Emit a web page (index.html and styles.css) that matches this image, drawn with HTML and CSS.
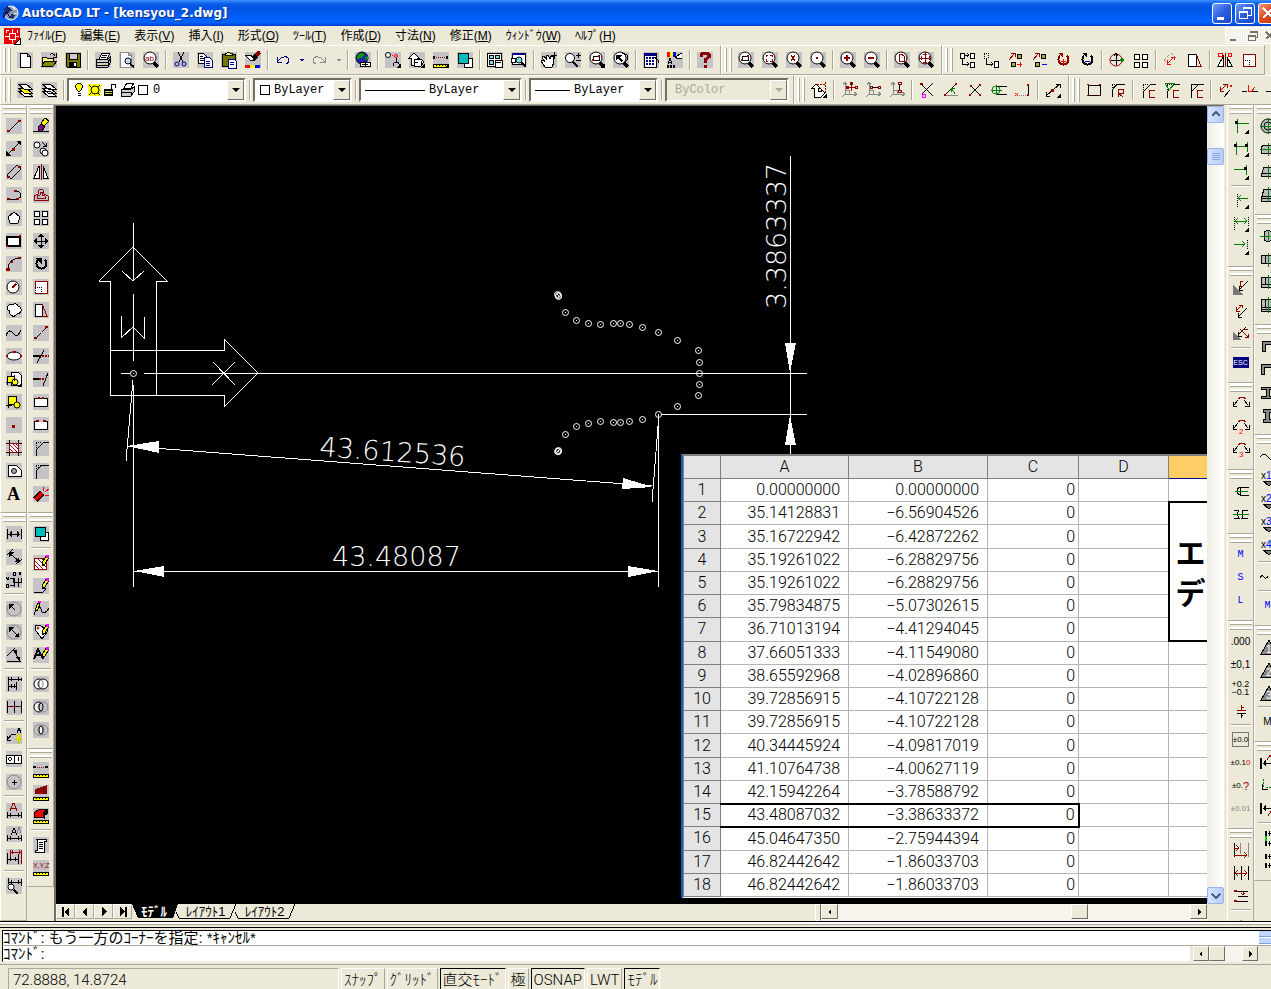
FILE: index.html
```html
<!DOCTYPE html>
<html lang="ja">
<head>
<meta charset="utf-8">
<title>AutoCAD LT - [kensyou_2.dwg]</title>
<link rel="stylesheet" href="styles.css">
</head>
<body>
<svg class="defs" aria-hidden="true">
  <defs>
    <g id="mag"><circle cx="7" cy="6" r="6" class="w"/><path d="M11 11l4 4" stroke-width="3"/></g>
    <g id="tri"><path d="M16 11v5h-5z" class="k"/></g>
    <g id="pencil"><path d="M9 8l4-7 3 1-4 7-3 2z" class="y"/><path d="M13 0h3v3h-3z" fill="#f0f" stroke="none"/></g>
    <g id="ruler"><rect x="0" y="12" width="15" height="3" class="y"/><path d="M3 14v-1M6 14v-1M9 14v-1M12 14v-1"/></g>
    <g id="hdim"><path d="M1 3v10M15 3v10M2 8h12M5 5v6M4 6v4M11 5v6M12 6v4"/></g>
    <g id="ucs"><path class="a" d="M4 0v12h12M2 3l2-3 2 3M13 10l3 2-3 2M4 8h4v4M1 15l3-3"/></g>
    <g id="weld"><path d="M5 4L1 9M0 6v4h4M11 4l4 5M16 6v4h-4"/><path class="r" d="M5 3V2h1V1h5v1h1v1"/></g>
    <g id="cham"><path d="M3 16V10L11 2H16"/><path d="M3 8V2H9" stroke-dasharray="1 1"/></g>
    <g id="dtri"><path d="M3 10h11l-5 5z" fill="#777"/></g>
    <g id="base"><path d="M1 15L9 1l8 14z" fill="#888"/></g>
    <g id="nodes"><path d="M2 8L7 2M4 1h4v4" class="r"/><rect x="10" y="2" width="4" height="4" fill="#aa3"/><rect x="4" y="10" width="4" height="4" fill="#aa3"/></g>
    <g id="pt"><circle cx=".5" cy=".5" r="3"/><path d="M0 0h1" /></g>
  </defs>
</svg>

<header class="title">
  <svg class="ic" aria-hidden="true"><circle cx="9" cy="8" r="7" fill="#89a" stroke="#fff"/><path d="M2 4l4-3 3 4-4 4-4 2zM9 9l4 1-2 4-3-1z" fill="#137" stroke="none"/><path d="M1 13l4-6 3 6M5 2l5 4" stroke="#206"/><path d="M10 2l4 3M12 8l3 1" stroke="#eee"/></svg>
  <h1>AutoCAD LT - [kensyou_2.dwg]</h1>
  <div class="winbtns">
    <button aria-label="最小化"><svg><path d="M4 14h7" stroke-width="3"/></svg></button>
    <button aria-label="元に戻す"><svg><path d="M7 6V3h8v8h-3M7 4h8M3 7h8v7H3zM3 8h8"/></svg></button>
    <button class="close" aria-label="閉じる"><svg><path d="M4 4l10 10M14 4L4 14" stroke-width="2"/></svg></button>
  </div>
</header>

<nav class="menu">
  <svg class="ic" aria-hidden="true"><rect width="16" height="16" fill="#e00" stroke="none"/><path d="M8 1v4M8 11v4M1 8h4M11 8h4M5 5h6v6H5zM2 2v3M2 2h3M13 2v3" stroke="#fff"/><path d="M11 16l5-5v5z" fill="#fff"/></svg>
  <button>ﾌｧｲﾙ(<u>F</u>)</button><button>編集(<u>E</u>)</button><button>表示(<u>V</u>)</button><button>挿入(<u>I</u>)</button><button>形式(<u>O</u>)</button><button>ﾂｰﾙ(<u>T</u>)</button><button>作成(<u>D</u>)</button><button>寸法(<u>N</u>)</button><button>修正(<u>M</u>)</button><button>ｳｨﾝﾄﾞｳ(<u>W</u>)</button><button>ﾍﾙﾌﾟ(<u>H</u>)</button>
  <div class="mdi">
    <button aria-label="図面を最小化"><svg><path d="M4 12h6" stroke-width="2"/></svg></button>
    <button aria-label="図面を元に戻す"><svg><path d="M6 5V3h7v6h-2M6 4h7M4 7h7v5H4zM4 8h7"/></svg></button>
    <button aria-label="図面を閉じる"><svg><path d="M4 4l7 7M11 4l-7 7" stroke-width="2"/></svg></button>
  </div>
</nav>

<div class="row">
  <div class="hbar grey">
    <span class="grip"></span>
    <button aria-label="新規"><svg><path class="w" d="M3 1h7l3 3v11H3zM10 1v3h3"/></svg></button>
    <button aria-label="開く"><svg><path d="M1 14V5h4l1 1h6v3" fill="#ff8"/><path d="M1 14l3-5h12l-4 5z" fill="#880"/><path d="M9 3q3-3 5 1M15 1v4h-3"/></svg></button>
    <button aria-label="上書き保存"><svg><path d="M1 1h14v14H2l-1-1z" fill="#770"/><rect x="4" y="1" width="8" height="6" fill="#ccc"/><rect x="4" y="10" width="8" height="5" class="k"/><path d="M10 11v3" stroke="#fff" stroke-width="2"/></svg></button>
    <span class="sep"></span>
    <button aria-label="印刷"><svg><path class="w" d="M4 7l3-6h8l-3 6z"/><path d="M7 3h5M6 5h5"/><path d="M1 7h12l2-2v6l-2 4H1z" fill="#ccc"/><path d="M1 10h12v5M1 13h12M13 10l2-3"/><path d="M9 12h2" stroke="#cc0"/></svg></button>
    <button aria-label="印刷プレビュー"><svg><path class="w" stroke="#888" d="M1 0h8l3 3v12H1zM9 0v3h3"/><circle cx="9" cy="9" r="3" fill="#bdf"/><path d="M11 12l4 3" stroke-width="2"/></svg></button>
    <button aria-label="検索"><svg><use href="#mag"/><text x="2" y="9" class="x8 tr">ab</text></svg></button>
    <span class="sep"></span>
    <button aria-label="切り取り"><svg><path d="M5 0l5 10M11 0L6 10"/><circle class="n" cx="4" cy="12" r="2"/><circle class="n" cx="11" cy="12" r="2"/></svg></button>
    <button aria-label="コピー"><svg><path class="w" d="M1 1h5l3 3v7H1z"/><path d="M3 4h3M3 6h4M3 8h4"/><path class="w n" d="M7 5h5l3 3v7H7z"/><path class="n" d="M9 9h4M9 11h4M9 13h4"/></svg></button>
    <button aria-label="貼り付け"><svg><path d="M1 2h13v12H1z" fill="#770"/><path d="M4 3h7V1H9L8 0 6 1H4z" fill="#ff6"/><path class="w n" d="M7 7h6l2 2v7H7z"/><path class="n" d="M9 10h4M9 12h4"/></svg></button>
    <button aria-label="プロパティコピー"><svg><path d="M15 0l-6 5" stroke="#800" stroke-width="4"/><path class="k" d="M9 2l4 4-4 3-3-3z"/><path class="w" d="M0 3h6l3 5H5z"/><path d="M0 14h5" stroke="red" stroke-width="3"/><path d="M5 14h5" stroke="#ff0" stroke-width="3"/><path d="M10 14h5" stroke="#00f" stroke-width="3"/></svg></button>
    <span class="sep"></span>
    <button class="p" aria-label="元に戻す"><svg><path class="n" d="M2 5v5h5M2 10l4-4q7-3 8 2 0 3-3 4"/></svg></button>
    <button class="p dd" aria-label="元に戻す履歴"><svg><path d="M0 7h5l-2 3z" fill="#008" stroke="none"/></svg></button>
    <button class="p" aria-label="やり直し"><svg><path class="a" d="M13 5v5H8M13 10L9 6Q2 3 1 8q0 3 3 4"/></svg></button>
    <button class="p dd" aria-label="やり直し履歴"><svg><path d="M0 7h5l-2 3z" fill="#888" stroke="none"/></svg></button>
    <span class="sep"></span>
    <button aria-label="ハイパーリンク"><svg><circle cx="7" cy="6" r="6" fill="#22a"/><path d="M3 2l4-1 3 2-4 3-4 1zM9 6l4-2v4z" fill="#090" stroke="none"/><rect x="5" y="10" width="5" height="4" class="w"/><rect x="10" y="10" width="5" height="4" class="w"/><path d="M7 12h6"/></svg></button>
    <span class="sep"></span>
    <button aria-label="オブジェクトスナップ"><svg><circle class="w" cx="3" cy="3" r="2.5"/><circle cx="11" cy="4" r="1.5" class="e"/><path d="M5 3h4" class="e" stroke-dasharray="1 1"/><path d="M11 6v5M8 14q0-4 3-4t4 4"/><use href="#tri"/></svg></button>
    <button aria-label="UCS"><svg><path class="w" d="M0 6l5-5 5 5H8v7H2V6z"/><path class="w" d="M5 7h7l3 3-3 4H5z"/><path d="M6 10h3M12 9v3"/><use href="#tri"/></svg></button>
    <button aria-label="距離"><svg><path d="M1 5h14" class="r" stroke-dasharray="1 1"/><path d="M0 5h2M13 5h2" stroke-width="3"/><use href="#ruler"/><use href="#tri"/></svg></button>
    <button aria-label="表示順序"><svg><path class="w" d="M7 6h8v9H7z"/><path d="M1 1h10v10H1z" fill="#0bb"/></svg></button>
    <span class="sep"></span>
    <button aria-label="名前の付いたビュー"><svg><path class="w" d="M0 1h14v13H0z"/><path d="M2 3h4v3H2zM8 3h4v3H8zM2 8h4v4H2z" fill="#8dd"/><path class="w" d="M8 8h7v7H8z"/><path d="M9 10h5"/></svg></button>
    <button aria-label="空中ビュー"><svg><path class="w" d="M1 1h13v11H1z"/><path d="M1 2h13" class="n" stroke-width="2"/><circle cx="8" cy="8" r="3" fill="#7dd"/><path d="M10 10l5 5" stroke-width="2"/><path class="w" d="M0 6h4v4H0z"/></svg></button>
    <span class="sep"></span>
    <button aria-label="リアルタイム画面移動"><svg><path class="w" d="M4 15L0 9l2-1 2 2L1 5l2-1 3 4-1-5 2 0 2 4 1-3h2l1 6-2 5z"/><path d="M13 0v7M10 3h6"/></svg></button>
    <button aria-label="リアルタイムズーム"><svg><circle class="w" cx="5" cy="6" r="4.5"/><path d="M8 10l5 5" stroke-width="2"/><path d="M13 1v5M11 3h5M11 8h5"/></svg></button>
    <button aria-label="窓ズーム"><svg><use href="#mag"/><rect x="4" y="4" width="6" height="4"/><path class="r" d="M3 8h2M9 4h2" stroke-width="2"/><use href="#tri"/></svg></button>
    <button aria-label="前画面ズーム"><svg><use href="#mag"/><path class="k" d="M3 3h6L7 5l3 4-2 1-3-4-2 2z"/><path d="M9 1l5 2v5l-4 5"/></svg></button>
    <span class="sep"></span>
    <button aria-label="プロパティ"><svg><path class="w" d="M1 1h12v14H1z"/><path d="M1 2h12" class="n" stroke-width="3"/><path class="n" d="M3 6h2M6 6h2M9 6h2M3 9h2M6 9h2M9 9h2M3 12h2M6 12h2M9 12h2" stroke-width="2"/><path d="M11 5l4 3v3"/></svg></button>
    <button aria-label="DesignCenter"><svg><path d="M1 0v5" stroke="red" stroke-width="3"/><path d="M4 0v5" stroke="#ff0" stroke-width="3"/><path d="M7 0v5" stroke="#00f" stroke-width="3"/><path class="w" d="M15 1l-7 4 3 2 4-1"/><path d="M1 12l2-6 2 6M2 10h2"/><path d="M0 14h8" stroke-width="3" stroke-dasharray="2 1"/></svg></button>
    <span class="sep"></span>
    <button aria-label="ヘルプ"><svg><path d="M4 5V3l2-2h4l2 2v2L8 8v3M8 13v3" stroke="#800" stroke-width="3"/></svg></button>
  </div>
  <div class="hbar grey">
    <span class="grip"></span>
    <button aria-label="窓"><svg><use href="#mag"/><rect x="4" y="4" width="6" height="4"/><path class="r" d="M3 8h2M9 4h2" stroke-width="2"/></svg></button>
    <button aria-label="ダイナミック"><svg><use href="#mag"/><path class="r" d="M4 5V3h2M8 3h2v2M10 7v2H8M6 9H4V7"/></svg></button>
    <button aria-label="倍率"><svg><use href="#mag"/><path class="r" d="M5 3l4 6M9 3L5 9"/></svg></button>
    <button aria-label="中心"><svg><use href="#mag"/><path class="r" d="M6 6h2" stroke-width="2"/></svg></button>
    <span class="sep"></span>
    <button aria-label="拡大"><svg><use href="#mag"/><path class="r" d="M4 6h6M7 3v6" stroke-width="2"/></svg></button>
    <button aria-label="縮小"><svg><use href="#mag"/><path class="r" d="M4 6h6" stroke-width="2"/></svg></button>
    <span class="sep"></span>
    <button aria-label="図面全体"><svg><use href="#mag"/><path class="r" d="M5 2h3l2 2v5H5zM8 2v2"/></svg></button>
    <button aria-label="オブジェクト範囲"><svg><use href="#mag"/><path class="r" d="M1 6h12M7 0v12M3 4v4M11 4v4M5 2h4M5 10h4"/></svg></button>
  </div>
  <div class="hbar">
    <span class="grip"></span>
    <button aria-label="部品1"><svg><path class="w" d="M1 1h4v5H1zM11 1h4v5h-4zM11 10h4v5h-4z"/><path d="M5 3h5M8 1l2 2-2 2M3 7v5h7M8 10l2 2-2 2"/></svg></button>
    <button aria-label="部品2"><svg><path d="M1 1h4v5H1z" stroke-dasharray="1 1"/><path class="w" d="M11 9h4v6h-4z"/><path d="M3 7v5h7M8 10l2 2-2 2"/></svg></button>
    <button aria-label="頂点追加"><svg><use href="#nodes"/><path class="e" d="M10 12h5M13 10v5"/></svg></button>
    <button aria-label="頂点削除"><svg><use href="#nodes"/><path class="b" d="M11 12h5"/></svg></button>
    <button aria-label="回転追加"><svg><path d="M5 4a5 5 0 1 0 7 0" stroke="#800" stroke-width="2"/><path d="M3 1h5v5z" fill="#800" stroke="none"/><path class="e" d="M6 9h5M8 7v5"/></svg></button>
    <button aria-label="回転削除"><svg><path d="M5 4a5 5 0 1 0 7 0" stroke-width="2"/><path class="k" d="M3 1h5v5z"/><path class="b" d="M6 9h5"/></svg></button>
    <span class="sep"></span>
    <button aria-label="円移動"><svg><circle class="r" cx="7" cy="8" r="6"/><path d="M2 8h13M7 3v10M5 4l2-3 2 3"/><path class="g" d="M11 8h4M13 6v4" stroke-width="2"/></svg></button>
    <button aria-label="配列"><svg><path class="w" d="M1 2h5v5H1zM9 2h5v5H9zM1 10h5v5H1zM9 10h5v5H9z"/></svg></button>
    <span class="sep"></span>
    <button aria-label="平行移動"><svg><path class="a" d="M1 8l7-7 7 7M1 8l4 4" stroke-dasharray="1 1"/><path class="e" d="M4 12l7-7M4 8v4h4M8 5h3v3"/></svg></button>
    <button aria-label="ストレッチ"><svg><path class="w" d="M1 2h8v12H1z"/><path class="r" d="M9 2l5 12H9"/></svg></button>
    <span class="sep"></span>
    <button aria-label="鏡像"><svg><path class="r" d="M8 1v14"/><path class="w" d="M1 14l5-9v9zM15 14l-5-9v9z"/><path class="e" d="M1 5V1h4v3H1M11 5V1h3v3h-3"/></svg></button>
    <button aria-label="尺度"><svg><path class="w r" d="M2 2h12v12H2z"/><path d="M2 8h6v6" stroke-dasharray="1 1"/></svg></button>
  </div>
</div>

<div class="row">
  <div class="hbar grey">
    <span class="grip"></span>
    <button aria-label="画層を現在に"><svg><path class="w" d="M1 9l6 5h8l-6-5z"/><path class="y" d="M1 6l6 5h8l-6-5z"/><path class="w" d="M1 2l6 5h8L9 2z"/></svg></button>
    <button aria-label="画層"><svg><path class="w" d="M1 9l6 5h8l-6-5zM1 6l6 5h8l-6-5zM1 2l6 5h8L9 2z"/></svg></button>
    <span class="sep"></span>
    <div class="combo layer">
      <svg class="state" aria-hidden="true"><path class="y" d="M5 9Q2 6 3 3q3-3 6 0 1 3-2 6z"/><path d="M5 11h3M5 13h3"/><path d="M15 2h13v12H15z" fill="#ff0" stroke="none"/><circle cx="22" cy="8" r="4" class="y"/><path d="M16 3l2 2M27 3l-2 2M16 13l2-2M27 13l-2-2"/><path class="k" d="M31 7h9v7h-9z"/><path d="M32 9h7M32 11h7" stroke="#cc6"/><path d="M38 7V2h4v4"/><path class="w" d="M51 6l3-5h7l-3 5z"/><path d="M48 7h10l3-2v5l-3 4H48z" fill="#ccc"/><path d="M48 10h10v4"/><rect x="65" y="3" width="9" height="9" class="w"/></svg>
      <select aria-label="画層"><option>0</option></select><i></i>
    </div>
    <span class="sep"></span>
    <div class="combo color">
      <svg class="swatch" aria-hidden="true"><rect x="1" y="3" width="9" height="9" class="w"/></svg>
      <select aria-label="色"><option>ByLayer</option></select><i></i>
    </div>
    <span class="sep"></span>
    <div class="combo ltype">
      <span class="line"></span>
      <select aria-label="線種"><option>ByLayer</option></select><i></i>
    </div>
    <span class="sep"></span>
    <div class="combo lweight">
      <span class="line"></span>
      <select aria-label="線の太さ"><option>ByLayer</option></select><i></i>
    </div>
    <span class="sep"></span>
    <div class="combo pstyle off">
      <select aria-label="印刷スタイル" disabled><option>ByColor</option></select><i></i>
    </div>
  </div>
  <div class="hbar">
    <span class="grip"></span>
    <button aria-label="原点"><svg><path class="w" d="M1 6l4-4 4 4H7v3h3V7l4 4-4 4H3V6z"/><path class="r" d="M6 2h9M14 0v11" stroke-dasharray="2 1"/><use href="#tri"/></svg></button>
    <span class="sep"></span>
    <button aria-label="UCS原点"><svg><use href="#ucs"/><path class="r" d="M6 5h9M10 1v8M5 4h2v2H5zM14 4h2v2h-2zM9 0h2v2H9z"/></svg></button>
    <button aria-label="UCS X"><svg><use href="#ucs"/><path class="r" d="M5 4h2v2H5zM13 4h2v2h-2z"/><path d="M7 5h6"/></svg></button>
    <button aria-label="UCS Y"><svg><use href="#ucs"/><path class="r" d="M9 0h3v2H9zM9 8h3v2H9z"/><path d="M10 2v6"/></svg></button>
    <span class="sep"></span>
    <button aria-label="交点"><svg><path d="M2 2l12 12M14 1L3 12"/><path class="r" d="M1 2h3M1 1h3"/><path d="M3 12h3v3H3z" stroke="#f0f"/></svg></button>
    <button aria-label="角度"><svg><path d="M2 13L13 2"/><path class="a" d="M2 13h13"/><path class="r" d="M1 13h2M12 2h2" stroke-width="2"/><path class="g" d="M12 12L9 7M8 10V6h4"/></svg></button>
    <button aria-label="中間点"><svg><path d="M3 13L13 3M4 4l9 9"/><path class="r" d="M2 13h2M12 3h2M3 4h2M12 13h2" stroke-width="2"/></svg></button>
    <button aria-label="接線"><svg><circle class="g" cx="5" cy="8" r="4"/><path d="M6 4h10M6 12h10"/><path class="g" d="M0 8h11M5 3v10"/></svg></button>
    <button aria-label="垂線"><svg><path class="e" d="M0 11l3 3M3 11l-3 3"/><path class="a" d="M4 13h8" stroke-dasharray="1 1"/><path d="M13 2v12"/><path class="r" d="M12 3h2M12 13h2" stroke-width="2"/></svg></button>
    <span class="sep"></span>
    <button aria-label="構築線"><svg><path d="M1 14L15 2M1 10v4h4M11 2h4v4" /><path class="r" d="M6 8h3" stroke-width="3"/><use href="#tri"/></svg></button>
  </div>
  <div class="hbar">
    <span class="grip"></span>
    <button aria-label="長方形"><svg><path d="M2 3h12v10H2z"/><path class="r" d="M1 2h2M13 2h2M1 13h2M13 13h2"/></svg></button>
    <button aria-label="フィレット R"><svg><path d="M2 15V10Q3 3 11 2h4"/><path d="M2 8V2h6" stroke-dasharray="1 1"/><path class="r" d="M8 15V7h5v4H8l5 4"/></svg></button>
    <span class="sep"></span>
    <button aria-label="面取り 1"><svg><use href="#cham"/><path class="r" d="M15 8H9v7h6"/></svg></button>
    <button aria-label="面取り 2"><svg><use href="#cham"/><path class="g" d="M1 1h10L5 8z"/><path class="r" d="M15 8H9v7h6"/></svg></button>
    <button aria-label="面取り 3"><svg><path d="M3 16V2H16M3 10l8-8"/><path class="r" d="M15 8H9v7h6"/></svg></button>
    <span class="sep"></span>
    <button aria-label="線分延長"><svg><path d="M6 15L12 8"/><path class="r" d="M2 9l7-7M2 5v4h4M5 2h4v4"/><path class="e" d="M12 4h2" stroke-width="2"/></svg></button>
    <button aria-label="切断"><svg><path d="M0 9h5M10 9h6"/><path class="e" d="M6 3v6h4l3-4"/></svg></button>
    <button aria-label="結合"><svg><path d="M0 9h16"/></svg></button>
  </div>
</div>

<main>
  <div class="vcol grey">
    <div class="vbar">
      <span class="grip"></span>
      <button aria-label="線分"><svg><path d="M3 13L13 3"/><path class="r" d="M1 13h3M12 3h3" stroke-width="2"/></svg></button>
      <button aria-label="構築線"><svg><path d="M1 14L14 1"/><path class="k" d="M0 10v5h5zM15 5V0h-5z"/><path class="r" d="M6 8h3" stroke-width="3"/></svg></button>
      <button aria-label="二重線"><svg><path d="M1 11L11 1M5 15L15 5M1 11l4 4M11 1l4 4"/><path class="r" d="M1 13h3M12 3h3" stroke-width="2"/></svg></button>
      <button aria-label="ポリライン"><svg><path d="M2 12h9q4-1 4-4t-5-4"/><path class="r" d="M1 12h3M10 12h3M8 4h3" stroke-width="2"/></svg></button>
      <button aria-label="ポリゴン"><svg><path class="w" d="M8 2l6 5-2 6H4L2 7z"/></svg></button>
      <button aria-label="長方形"><svg><path class="w" d="M1 4h13v9H1z" stroke-width="2"/><path class="r" d="M0 13h2M13 3h2" stroke-width="2"/></svg></button>
      <button aria-label="円弧"><svg><path d="M2 12Q3 3 14 2"/><path class="r" d="M0 13h4" stroke-width="3"/><path class="r" d="M4 6h3M12 2h3" stroke-width="2"/></svg></button>
      <button aria-label="円"><svg><circle class="w" cx="7" cy="8" r="6"/><path class="r" d="M7 8l3-3M6 8h2" stroke-width="2"/></svg></button>
      <button aria-label="雲マーク"><svg><path class="w" d="M4 9Q0 8 2 4q2-3 4-1 4-3 6 1 4 1 3 5-1 3-4 3-3 4-6 1-2-1-1-4z"/></svg></button>
      <button aria-label="スプライン"><svg><path d="M0 11Q3 2 8 9q4 4 7-4"/></svg></button>
      <button aria-label="楕円"><svg><ellipse class="w" cx="8" cy="8" rx="7" ry="4"/><path class="r" d="M0 8h2M7 4h3M14 8h2" stroke-width="2"/></svg></button>
      <button aria-label="ブロック挿入"><svg><path class="w" d="M5 1h7l3 3v10H5z"/><rect x="1" y="5" width="7" height="6" class="y"/><circle cx="9" cy="11" r="3" class="y"/><path d="M0 11h5M1 9v5M8 4v6"/><use href="#tri"/></svg></button>
      <button aria-label="ブロック作成"><svg><rect x="2" y="2" width="8" height="8" class="y"/><circle cx="11" cy="11" r="3" class="y"/><path d="M0 11h6M2 9v5"/></svg></button>
      <button aria-label="点"><svg><path class="r" d="M6 9h3" stroke-width="3"/></svg></button>
      <button aria-label="ハッチング"><svg><path d="M3 0v16M12 0v16M0 3h16M0 12h16"/><path class="r" d="M3 3h9v9H3zM3 8l4 4M3 4l8 8M6 3l6 6M9 3l3 3" fill="#fff"/></svg></button>
      <button aria-label="リージョン"><svg><path class="w" d="M2 2h8l5 5v6H2z"/><circle cx="8" cy="8" r="2.5" fill="#aaa"/></svg></button>
      <button class="bigA">A</button>
    </div>
    <div class="vbar rest">
      <span class="grip"></span>
      <button aria-label="長さ寸法"><svg><use href="#hdim"/></svg></button>
      <button aria-label="平行寸法"><svg><path d="M1 6l6-6M10 15l6-5M3 4l10 8"/><path class="k" d="M3 3h5l-5 5zM13 13V8l-5 5z"/></svg></button>
      <button aria-label="座標寸法"><svg><path d="M7 0h2v3H7zM13 0l2 3M15 0l-2 3M0 5l2 3 1-3M0 12h2v3H0zM4 6h3v4h8V6M4 13h4M8 6v9M12 6v9"/></svg></button>
      <span class="sep"></span>
      <button aria-label="半径寸法"><svg><circle class="a" cx="8" cy="8" r="7"/><path d="M4 4l5 5"/><path class="k" d="M3 3h5l-5 5z"/></svg></button>
      <button aria-label="直径寸法"><svg><circle class="a" cx="8" cy="8" r="7"/><path d="M4 4l8 8"/><path class="k" d="M3 3h5l-5 5zM13 13V8l-5 5z"/></svg></button>
      <button aria-label="角度寸法"><svg><path d="M1 9l8-8M1 14h14M8 4l5 8"/><path class="k" d="M6 3h5v5zM9 10h5v4z"/></svg></button>
      <span class="sep"></span>
      <button aria-label="並列寸法"><svg><path d="M2 1v14M15 2v3M2 3h13M5 1v4M12 1v4M2 10h8M10 6v8M5 8v4M8 8v4"/></svg></button>
      <button aria-label="直列寸法"><svg><path d="M1 2v12M8 2v12M15 2v12M3 7h11"/><path class="r" d="M2 7h2M6 7h4M13 7h2"/></svg></button>
      <span class="sep"></span>
      <button aria-label="引出線"><svg><path d="M1 12l5-6h4M1 8v4h4M11 5l2-5 2 5"/><path d="M13 6l-3 5h3l-1 5 4-6h-3l2-4z" fill="#ff0" stroke="#cc0"/></svg></button>
      <button aria-label="幾何公差"><svg><path class="w" d="M0 4h15v8H0zM8 4v8"/><path d="M2 8l2-2 2 2-2 2zM12 6v4"/></svg></button>
      <button aria-label="中心マーク"><svg><circle class="a" cx="8" cy="8" r="7"/><path d="M6 8h5M8 6v5"/></svg></button>
      <span class="sep"></span>
      <button aria-label="寸法編集"><svg><path class="r" d="M4 8l3-8h1l3 8M5 5h5"/><path d="M1 9v6M15 9v6M1 12h14M4 10v4M12 10v4"/></svg></button>
      <button aria-label="寸法文字位置"><svg><path d="M5 9l3-7 3 7M6 6h4M1 9v6M15 9v6M1 12h14M4 10v4M12 10v4"/><path class="a" d="M11 7l2-6 2 6"/></svg></button>
      <button aria-label="寸法更新"><svg><path class="r" d="M4 1v10M15 1v14M4 3h11M6 1v4M13 1v4"/><path d="M1 4v11M12 5v10M1 10h11M4 8v4M9 8v4"/></svg></button>
      <span class="sep"></span>
      <button aria-label="寸法スタイル"><svg><path d="M2 0v6M15 1v7M2 4h13M5 2v4M12 2v4"/><circle class="w" cx="5" cy="9" r="3"/><path d="M8 12l4 4" stroke-width="2"/></svg></button>
    </div>
  </div>
  <div class="vcol grey">
    <div class="vbar">
      <span class="grip"></span>
      <button aria-label="削除"><svg><path d="M0 13h5M9 13h7"/><path class="y" d="M8 5l4-5 4 3-5 5z"/><path d="M5 9l3-3 4 3-3 4H5z" fill="#808"/></svg></button>
      <button aria-label="複写"><svg><circle class="w" cx="4" cy="4" r="3"/><circle class="w" cx="10" cy="10" r="3"/><circle class="w" cx="12" cy="12" r="3"/><path d="M9 1l4 4M13 2v3h-3"/></svg></button>
      <button aria-label="鏡像"><svg><path class="w" d="M1 14L6 2v12zM15 14L10 2v12z"/><path class="r" d="M8 0v16"/></svg></button>
      <button aria-label="オフセット"><svg><path class="r" d="M1 13V9l4-2q0-5 3-5t3 5l4 2v4zM4 11h8V9L9 8V5H7v3L4 9z"/></svg></button>
      <button aria-label="配列複写"><svg><path class="w" d="M1 1h5v5H1zM9 1h5v5H9zM1 9h5v5H1zM9 9h5v5H9z"/></svg></button>
      <button aria-label="移動"><svg><path d="M1 8h14M8 1v14"/><path class="k" d="M0 8l4-3v6zM16 8l-4-3v6zM8 0L5 4h6zM8 16l-3-4h6z"/></svg></button>
      <button aria-label="回転"><svg><path d="M5 4a5 5 0 1 0 7 0" stroke-width="2"/><path class="k" d="M2 2h7v6z"/></svg></button>
      <button aria-label="尺度変更"><svg><path class="w r" d="M2 2h12v12H2z"/><path class="w" d="M2 8h6v6H2z" stroke-dasharray="1 1"/></svg></button>
      <button aria-label="ストレッチ"><svg><path class="w" d="M2 2h7v12H2z"/><path class="r" d="M9 2l5 12H9"/></svg></button>
      <button aria-label="長さ変更"><svg><path d="M3 13l5-5M12 4l2-2"/><path class="r" d="M1 13h3M12 2h3" stroke-width="2"/><path class="r" d="M9 7l3-3"/></svg></button>
      <button aria-label="トリム"><svg><path d="M0 8h8" stroke-width="2"/><path d="M4 15l7-13"/><path class="r" d="M9 8h7" stroke-width="2" stroke-dasharray="2 1"/></svg></button>
      <button aria-label="延長"><svg><path d="M0 8h6" stroke-width="2"/><path d="M10 15l5-13"/><path class="r" d="M6 8h6" stroke-width="2" stroke-dasharray="2 1"/></svg></button>
      <button aria-label="点で部分削除"><svg><path class="w" d="M1 4h13v8H1z"/><path class="r" d="M5 4h2M9 4h2" stroke-width="2"/></svg></button>
      <button aria-label="部分削除"><svg><path class="w" d="M1 4h13v8H1z"/><path d="M5 4h6" stroke="#c6c3c6"/><path class="r" d="M3 4h3M10 4h3" stroke-width="2"/></svg></button>
      <button aria-label="面取り"><svg><use href="#cham"/></svg></button>
      <button aria-label="フィレット"><svg><path d="M3 16V11Q4 3 12 2h4"/><path d="M3 8V2h6" stroke-dasharray="1 1"/></svg></button>
      <button aria-label="分解"><svg><path d="M2 14l7-7" stroke="#000" stroke-width="6"/><path d="M2 14l7-7" stroke="#d00" stroke-width="4"/><path class="e" d="M10 5l1-4M12 6l4-3M12 9h4"/></svg></button>
    </div>
    <div class="vbar">
      <span class="grip"></span>
      <button aria-label="表示順序"><svg><path class="w" d="M7 6h8v8H7z"/><path d="M2 1h10v9H2z" fill="#0bb"/></svg></button>
      <span class="sep"></span>
      <button aria-label="ハッチング編集"><svg><path class="w r" d="M1 3h12v11H1zM1 9l5 5M1 5l9 9M4 3l9 9M8 3l5 5"/><use href="#pencil"/></svg></button>
      <button aria-label="ポリライン編集"><svg><path d="M1 14h9l3-3-3-2"/><use href="#pencil"/></svg></button>
      <button aria-label="スプライン編集"><svg><path d="M1 14L4 5q4 0 5 6 4 2 7-4"/><path class="y" d="M2 9l3-7 2 1-3 7z"/><path d="M5 0h3v2H5z" fill="#f0f" stroke="none"/></svg></button>
      <button aria-label="属性編集"><svg><path class="w" d="M2 1l5 0 8 6-6 8-6-8z"/><circle class="r" cx="5" cy="4" r="1"/><use href="#pencil"/></svg></button>
      <button aria-label="文字編集"><svg><path d="M1 12L5 2l5 10M3 8h5" stroke-width="2"/><use href="#pencil"/></svg></button>
      <span class="sep"></span>
      <button aria-label="和"><svg><circle class="w" cx="6" cy="8" r="5"/><circle class="w" cx="10" cy="8" r="5"/><ellipse class="w a" cx="8" cy="8" rx="2" ry="4"/></svg></button>
      <button aria-label="差"><svg><circle class="w" cx="6" cy="8" r="5"/><circle class="a" cx="10" cy="8" r="5" fill="#c6c3c6"/><ellipse cx="8" cy="8" rx="2" ry="4"/></svg></button>
      <button aria-label="交差"><svg><circle class="a" cx="6" cy="8" r="5"/><circle class="a" cx="10" cy="8" r="5"/><ellipse class="w" cx="8" cy="8" rx="2" ry="4"/></svg></button>
    </div>
    <div class="vbar">
      <span class="grip"></span>
      <button aria-label="距離"><svg><path d="M2 5h12" class="r" stroke-dasharray="1 1"/><path d="M0 5h3M12 5h3" stroke-width="2"/><use href="#ruler"/></svg></button>
      <button aria-label="面積"><svg><path d="M2 9V4l12-4v9z" fill="#800" stroke="none"/><use href="#ruler"/></svg></button>
      <button aria-label="マスプロパティ"><svg><path d="M1 9V5l5-4h8l1 1-4 3v5z" fill="#e00"/><path class="k" d="M10 9V4l5-3v5z"/><use href="#ruler"/></svg></button>
      <span class="sep"></span>
      <button aria-label="オブジェクト情報"><svg><path class="w" d="M3 2h10v2h-2v11H2v-2h2V3z"/><path d="M6 5h4M6 7h4M6 9h4M6 11h4"/></svg></button>
      <button aria-label="位置表示"><svg><text x="0" y="8" class="x7 tr">X,Y,Z</text><use href="#ruler"/></svg></button>
    </div>
  </div>

  <section class="view">
    <div class="screen">
      <div class="canvas">
        <svg class="drawing" viewBox="56 106 1151 797" role="img" aria-label="図面">
          <path d="M133 223V281M99 281L133 247L167 281H156V395M99 281H110V395H224V407L258 373L224 339V350H110M122 271L133 281L144 271M121 316V338L133 327L144 338V317M133 294V361M213 362L235 385M235 362L212 385"/>
          <path d="M121 373H130M144 373H807M661 414H807M790 156V454M133 385V587M133 380L126 461M127 446L652 486M659 414L652 502M658 414V587M134 571H658"/>
          <path class="solid" d="M127 446L159 441V453ZM653 487L623 478L622 489ZM134 571L164 566V577ZM658 571L628 566V577ZM790 373L785 343H796ZM790 415L785 445H796Z"/>
          <g>
            <use href="#pt" x="133" y="373"/><use href="#pt" x="557" y="294"/><use href="#pt" x="558" y="296"/><use href="#pt" x="558" y="295"/><use href="#pt" x="565" y="312"/><use href="#pt" x="576" y="320"/><use href="#pt" x="588" y="323"/><use href="#pt" x="600" y="324"/><use href="#pt" x="613" y="323"/><use href="#pt" x="620" y="323"/><use href="#pt" x="629" y="324"/><use href="#pt" x="642" y="327"/><use href="#pt" x="658" y="332"/><use href="#pt" x="677" y="340"/><use href="#pt" x="698" y="350"/><use href="#pt" x="699" y="362"/><use href="#pt" x="699" y="373"/><use href="#pt" x="699" y="384"/><use href="#pt" x="698" y="395"/><use href="#pt" x="677" y="406"/><use href="#pt" x="658" y="414"/><use href="#pt" x="642" y="419"/><use href="#pt" x="629" y="421"/><use href="#pt" x="620" y="422"/><use href="#pt" x="613" y="422"/><use href="#pt" x="600" y="421"/><use href="#pt" x="588" y="423"/><use href="#pt" x="576" y="426"/><use href="#pt" x="565" y="434"/><use href="#pt" x="557" y="451"/><use href="#pt" x="558" y="451"/><use href="#pt" x="558" y="450"/>
          </g>
          <text x="332" y="566">43.48087</text>
          <text transform="translate(319 456) rotate(4)">43.612536</text>
          <text transform="translate(786 309) rotate(-90)">3.3863337</text>
        </svg>

        <div class="sheet">
          <table>
            <colgroup><col class="c0"><col class="ca"><col class="cb"><col class="cc"><col class="cd"><col class="ce"></colgroup>
            <thead><tr><th></th><th>A</th><th>B</th><th>C</th><th>D</th><th class="cur"></th></tr></thead>
            <tbody>
              <tr><th>1</th><td>0.00000000</td><td>0.00000000</td><td>0</td><td></td><td></td></tr>
              <tr><th>2</th><td>35.14128831</td><td>−6.56904526</td><td>0</td><td></td><td class="note" rowspan="6">エ<br>デ</td></tr>
              <tr><th>3</th><td>35.16722942</td><td>−6.42872262</td><td>0</td><td></td></tr>
              <tr><th>4</th><td>35.19261022</td><td>−6.28829756</td><td>0</td><td></td></tr>
              <tr><th>5</th><td>35.19261022</td><td>−6.28829756</td><td>0</td><td></td></tr>
              <tr><th>6</th><td>35.79834875</td><td>−5.07302615</td><td>0</td><td></td></tr>
              <tr><th>7</th><td>36.71013194</td><td>−4.41294045</td><td>0</td><td></td></tr>
              <tr><th>8</th><td>37.66051333</td><td>−4.11549080</td><td>0</td><td></td><td></td></tr>
              <tr><th>9</th><td>38.65592968</td><td>−4.02896860</td><td>0</td><td></td><td></td></tr>
              <tr><th>10</th><td>39.72856915</td><td>−4.10722128</td><td>0</td><td></td><td></td></tr>
              <tr><th>11</th><td>39.72856915</td><td>−4.10722128</td><td>0</td><td></td><td></td></tr>
              <tr><th>12</th><td>40.34445924</td><td>−4.09817019</td><td>0</td><td></td><td></td></tr>
              <tr><th>13</th><td>41.10764738</td><td>−4.00627119</td><td>0</td><td></td><td></td></tr>
              <tr><th>14</th><td>42.15942264</td><td>−3.78588792</td><td>0</td><td></td><td></td></tr>
              <tr class="boxed"><th>15</th><td>43.48087032</td><td>−3.38633372</td><td>0</td><td></td><td></td></tr>
              <tr><th>16</th><td>45.04647350</td><td>−2.75944394</td><td>0</td><td></td><td></td></tr>
              <tr><th>17</th><td>46.82442642</td><td>−1.86033703</td><td>0</td><td></td><td></td></tr>
              <tr><th>18</th><td>46.82442642</td><td>−1.86033703</td><td>0</td><td></td><td></td></tr>
            </tbody>
          </table>
        </div>
      </div>
      <div class="vscroll">
        <button aria-label="上へ"><svg><path d="M4 9l4-4 4 4"/></svg></button>
        <span class="gap"></span>
        <button aria-label="垂直スクロール"><svg class="lines"><path d="M4 4h8M4 6h8M4 8h8M4 10h8"/></svg></button>
        <span class="fill"></span>
        <button aria-label="下へ"><svg><path d="M4 6l4 4 4-4"/></svg></button>
      </div>
    </div>
    <div class="tabs">
      <div class="nav">
        <button aria-label="最初"><svg><path class="k" d="M11 3v9L6 8z"/><path d="M5 3v10" stroke-width="2"/></svg></button>
        <button aria-label="前"><svg><path class="k" d="M10 3v9L5 8z"/></svg></button>
        <button aria-label="次"><svg><path class="k" d="M6 3v9l5-4z"/></svg></button>
        <button aria-label="最後"><svg><path class="k" d="M5 3v9l5-4z"/><path d="M11 3v10" stroke-width="2"/></svg></button>
      </div>
      <button class="tab on"><svg aria-hidden="true" viewBox="0 0 46 15"><path class="k" d="M0 0h46l-5 14H6z"/></svg><span>ﾓﾃﾞﾙ</span></button>
      <button class="tab"><svg aria-hidden="true" viewBox="0 0 60 15"><path d="M0 8l3 6h51l6-14"/></svg><span>ﾚｲｱｳﾄ1</span></button>
      <button class="tab"><svg aria-hidden="true" viewBox="0 0 60 15"><path d="M0 8l3 6h51l6-14"/></svg><span>ﾚｲｱｳﾄ2</span></button>
      <div class="hscroll">
        <span class="split"></span>
        <button aria-label="左へ"><svg><path class="k" d="M9 5v6L6 8z"/></svg></button>
        <span class="fill"></span>
        <button aria-label="水平スクロール"></button>
        <span class="gap"></span>
        <button aria-label="右へ"><svg><path class="k" d="M7 5v6l3-3z"/></svg></button>
      </div>
    </div>
  </section>

  <div class="vcol right">
    <div class="vbar">
      <span class="grip"></span>
      <button aria-label="引出 左"><svg><path class="g" d="M4 1v14M4 5h12"/><path class="k" d="M2 3h3v3H2z"/><use href="#tri"/></svg></button>
      <button aria-label="引出 両"><svg><path class="g" d="M3 1v13M14 1v10M3 5h11"/><path class="k" d="M1 3h3v3H1zM12 3h3v3h-3z"/><use href="#tri"/></svg></button>
      <button aria-label="引出 右"><svg><path class="g" d="M13 1v10M1 5h12"/><path class="k" d="M11 3h3v3h-3z"/><use href="#tri"/></svg></button>
      <span class="sep"></span>
      <button aria-label="矢印 左"><svg><path d="M4 1v14" stroke-dasharray="1 1"/><path class="g" d="M5 5h10M8 2L5 5l3 3"/><use href="#tri"/></svg></button>
      <button aria-label="矢印 両"><svg><path d="M1 1v13M15 1v9" stroke-dasharray="1 1"/><path class="g" d="M2 5h12M5 2L2 5l3 3M11 2l3 3-3 3"/><use href="#tri"/></svg></button>
      <button aria-label="矢印 右"><svg><path d="M14 1v9" stroke-dasharray="1 1"/><path class="g" d="M1 5h11M9 2l3 3-3 3"/><use href="#tri"/></svg></button>
    </div>
    <div class="vbar">
      <span class="grip"></span>
      <button aria-label="面取り寸法"><svg><path d="M0 5l11 10H0z" fill="#777" stroke="none"/><path d="M15 1L6 10M6 6v4h4"/><path class="r" d="M10 1H7v5h3"/></svg></button>
      <button aria-label="引出寸法"><svg><path d="M14 5l-9 9M5 10v4h4"/><path class="r" d="M3 8l6-6M3 4v4h4M6 2h3v3"/></svg></button>
      <button aria-label="角寸法"><svg><path d="M0 6l8 8H0z" fill="#777" stroke="none"/><path d="M13 1L5 9M5 6v4h4"/><path class="r" d="M7 3l8 8M12 11h3V8M11 3h4"/></svg></button>
      <span class="sep"></span>
      <button class="lt esc">ESC</button>
    </div>
    <div class="vbar">
      <span class="grip"></span>
      <button aria-label="円弧寸法1"><svg><use href="#weld"/></svg></button>
      <button aria-label="円弧寸法2"><svg><use href="#weld"/><text x="6" y="15" class="x8 te">2</text></svg></button>
      <button aria-label="円弧寸法3"><svg><use href="#weld"/><text x="6" y="15" class="x8 te">3</text></svg></button>
    </div>
    <div class="vbar">
      <span class="grip"></span>
      <button aria-label="軸1"><svg><path d="M16 4H7L4 6v4l3 2h9M7 4v8"/><path class="g" d="M2 8h13"/></svg></button>
      <button aria-label="軸2"><svg><path d="M1 4h5L4 8l2 4H1M15 4H9l1 4-1 4h6"/><path class="g" d="M0 8h16"/></svg></button>
    </div>
    <div class="vbar">
      <span class="grip"></span>
      <button class="lt blue">M</button>
      <button class="lt blue">S</button>
      <button class="lt blue">L</button>
    </div>
    <div class="vbar">
      <span class="grip"></span>
      <button class="lt">.000</button>
      <button class="lt">±0,1</button>
      <button class="lt two">+0.2<br>−0.1</button>
      <button aria-label="上下"><svg><path class="r" d="M8 2v5M4 7h9M8 4h3"/><path d="M4 10h9M8 10v5M8 12h2"/></svg></button>
      <span class="sep"></span>
      <button class="lt sm framed">±0.0</button>
      <button class="lt sm">±0.1<b>0</b></button>
      <button class="lt sm">±0.<b class="q">?</b></button>
      <button class="lt sm dim">±0.01</button>
    </div>
    <div class="vbar rest">
      <span class="grip"></span>
      <button aria-label="寸法移動1"><svg><path d="M1 1v14"/><path class="a" d="M7 1v11M15 1v14"/><path class="r" d="M1 6h5M3 3l3 3-3 3M1 13h13M11 10l3 3-3 3"/></svg></button>
      <button aria-label="寸法移動2"><svg><path d="M1 1v14M8 1v14M15 1v14"/><path class="r" d="M2 8h12M5 5L2 8l3 3M11 5l3 3-3 3"/></svg></button>
      <button aria-label="寸法移動3"><svg><path d="M3 3h12M5 8h10M3 13h12"/><path class="r" d="M1 3h3M1 13h3" stroke-width="2"/><path class="r" d="M10 3v4M8 5l2 2 2-2"/></svg></button>
      <span class="sep"></span>
      <button aria-label="円寸法"><svg><circle cx="8" cy="8" r="4"/></svg></button>
    </div>
  </div>
  <div class="vcol right last">
    <div class="vbar">
      <span class="grip"></span>
      <button aria-label="ボルト1"><svg><circle cx="8" cy="8" r="7" fill="#bbb"/><circle cx="8" cy="8" r="4"/><path class="g" d="M0 8h16M8 0v16"/></svg></button>
      <button aria-label="ボルト2"><svg><path d="M1 12V6l3-2h12v8z" fill="#bbb"/><path class="g" d="M8 2v13M0 8h16"/></svg></button>
      <button aria-label="ボルト3"><svg><path d="M2 9l2-6h12v6zM1 9h15v3H1z" fill="#bbb"/><path class="g" d="M8 1v14"/></svg></button>
      <button aria-label="ボルト4"><svg><path d="M2 9l2-7h12v7zM1 9h15v2H1zM1 11h15v3H1z" fill="#bbb"/><path class="g" d="M8 0v15"/></svg></button>
    </div>
    <div class="vbar">
      <span class="grip"></span>
      <button aria-label="ナット1"><svg><path d="M4 4l4-2 4 2v8l-4 2-4-2z" fill="#bbb"/><path class="g" d="M0 8h16M8 2v12"/></svg></button>
      <button aria-label="ナット2"><svg><path d="M1 4h15v8H1zM5 4v8" fill="#bbb"/><path class="g" d="M8 2v14"/></svg></button>
      <button aria-label="ナット3"><svg><path d="M1 3h15v7H1zM5 3v7M1 10h15v3H1z" fill="#bbb"/><path class="g" d="M8 1v14"/></svg></button>
      <button aria-label="ナット4"><svg><path d="M1 2h15v8H1zM5 2v8M1 10h15v4H1zM1 12h15" fill="#bbb"/><path class="g" d="M8 0v16"/></svg></button>
    </div>
    <div class="vbar">
      <span class="grip"></span>
      <button aria-label="山形鋼1"><svg><path d="M2 13V3h14v3H5v7z" fill="#888"/></svg></button>
      <button aria-label="山形鋼2"><svg><path d="M1 13V3h15v3H4v7z" fill="#888"/></svg></button>
      <button aria-label="H形鋼"><svg><path d="M1 3h15v2H9v7h7v2H1v-2h5V5H1z" fill="#888"/></svg></button>
      <button aria-label="I形鋼"><svg><path d="M3 2h8v3H9v7h2v3H3v-3h2V5H3z" fill="#888"/><path class="e" d="M12 4v6"/></svg></button>
    </div>
    <div class="vbar">
      <span class="grip"></span>
      <button aria-label="破断線"><svg><path d="M0 9q4-5 8 0t8 0"/></svg></button>
      <button aria-label="倍率1"><svg><text x="1" y="8" class="x9">x<tspan class="tb">1</tspan></text><use href="#dtri"/></svg></button>
      <button aria-label="倍率2"><svg><text x="1" y="8" class="x9">x<tspan class="tb">2</tspan></text><use href="#dtri"/></svg></button>
      <button aria-label="倍率3"><svg><text x="1" y="8" class="x9">x<tspan class="tb">3</tspan></text><use href="#dtri"/></svg></button>
      <button aria-label="倍率4"><svg><text x="1" y="8" class="x9">x<tspan class="tb">4</tspan></text><use href="#dtri"/></svg></button>
      <span class="sep"></span>
      <button aria-label="波線"><svg><path d="M0 9q2-4 4-1t4-1M14 4q-5 3 0 8"/></svg></button>
      <span class="sep"></span>
      <button class="lt blue">M</button>
    </div>
    <div class="vbar">
      <span class="grip"></span>
      <button aria-label="仕上記号1"><svg><use href="#base"/><text x="6" y="14" class="x9 tw">1</text></svg></button>
      <button aria-label="仕上記号2"><svg><use href="#base"/><text x="6" y="14" class="x9 tw">2</text></svg></button>
      <button aria-label="仕上記号3"><svg><use href="#base"/><text x="6" y="14" class="x9 tw">3</text></svg></button>
      <span class="sep"></span>
      <button class="lt">M</button>
    </div>
    <div class="vbar">
      <span class="grip"></span>
      <button aria-label="データム1"><svg><path d="M1 3v11" stroke-width="2"/><path d="M3 8h12M4 6v4M5 5v6"/><path class="r" d="M7 5l3-5 3 5"/></svg></button>
      <button aria-label="データム2"><svg><path class="g" d="M3 1v8M6 9h10" stroke-dasharray="2 1"/><path d="M2 6v5h6"/></svg></button>
      <button aria-label="データム3"><svg><path d="M1 2v11" stroke-width="2"/><path d="M3 7h12M4 5v4M5 4v6"/><path class="r" d="M8 15l3-5 3 5"/></svg></button>
      <span class="sep"></span>
      <button aria-label="並び1"><svg><path d="M6 1v5M6 11v5" stroke-width="2"/><path d="M8 3h8M8 13h8M9 1v5M9 11v5"/><path d="M6 6v5" stroke="#0c0" stroke-width="2"/></svg></button>
      <button aria-label="並び2"><svg><path d="M6 1v5M6 10v5" stroke-width="2"/><path d="M8 3h8M8 12h8M9 1v5M9 10v5"/></svg></button>
    </div>
  </div>
</main>

<section class="cmd">
  <div class="log"><p>ｺﾏﾝﾄﾞ: もう一方のｺｰﾅｰを指定: *ｷｬﾝｾﾙ*</p><span class="mini"></span></div>
  <div class="prompt">
    <label for="cmdline">ｺﾏﾝﾄﾞ:</label><input id="cmdline" type="text">
    <div class="cscroll">
      <button aria-label="コマンド左"><svg><path class="k" d="M8 4v6L5 7z"/></svg></button>
      <button aria-label="コマンドスクロール"></button>
      <span></span>
      <button aria-label="コマンド右"><svg><path class="k" d="M6 4v6l3-3z"/></svg></button>
    </div>
  </div>
</section>

<footer class="status">
  <output>72.8888, 14.8724</output>
  <button>ｽﾅｯﾌﾟ</button><button>ｸﾞﾘｯﾄﾞ</button><button class="in">直交ﾓｰﾄﾞ</button><button>極</button><button class="in">OSNAP</button><button>LWT</button><button class="in">ﾓﾃﾞﾙ</button>
</footer>
</body>
</html>
```
FILE: styles.css
```css
:root {
  --face: #ece9d8;
  --shade: #aca899;
  --dark: #716f64;
  --jp: "Liberation Sans", "Noto Sans CJK JP", sans-serif;
  --thin: 300 16px/18px Roboto, "Noto Sans CJK JP", sans-serif;
}
* { box-sizing: border-box; }
body {
  margin: 0;
  height: 100vh;
  display: flex;
  flex-direction: column;
  overflow: hidden;
  background: var(--face);
  font: 12px/16px var(--jp);
  color: #000;
}
button {
  margin: 0;
  padding: 0;
  border: 0;
  background: none;
  color: inherit;
  font: inherit;
  display: flex;
  align-items: center;
  justify-content: center;
  flex: none;
}
.defs { position: absolute; width: 0; height: 0; }
svg { display: block; width: 16px; height: 16px; flex: none; overflow: visible; fill: none; stroke: #000; shape-rendering: crispEdges; }
circle, ellipse { shape-rendering: auto; }
svg text { stroke: none; fill: #000; }
.w { fill: #fff; }
.y { fill: #ff0; }
.k { fill: #000; stroke: none; }
.r { stroke: #900000; }
.e { stroke: #f00; }
.g { stroke: #008000; }
.n { stroke: #000080; }
.b { stroke: #00f; }
.a { stroke: #888; }
.x7 { font-size: 7px; }
.x8 { font-size: 8px; }
.x9 { font-size: 10px; }
svg .tr { fill: #900000; }
svg .tw { fill: #fff; }
svg .te { fill: #f00; }
svg .tb { fill: #00f; }
.grey .bigA { font: bold 18px/18px "Liberation Serif", serif; }

/* title and menu */
.title {
  height: 26px;
  flex: none;
  display: flex;
  align-items: center;
  padding-left: 2px;
  background: linear-gradient(#3a93ff 0, #0a5ce8 4px, #0054e3 9px, #0060ff 19px, #0065ff 22px, #003dd0 26px);
}
.title h1 {
  margin: 0 0 0 4px;
  font: bold 12px/24px "DejaVu Sans", sans-serif;
  color: #fff;
  text-shadow: 1px 1px #0a2a80;
}
.winbtns { display: flex; gap: 3px; margin: 0 -7px 0 auto; }
.winbtns button {
  width: 20px;
  height: 21px;
  border: 1px solid #fff;
  border-radius: 3px;
  background: linear-gradient(135deg, #6c9bf8, #2a5ee0 50%, #1e48c8);
}
.winbtns svg { width: 18px; height: 18px; stroke: #fff; }
.winbtns .close { background: linear-gradient(135deg, #f0977a, #dd4a20 50%, #c03410); }
.menu { height: 19px; flex: none; display: flex; align-items: center; padding-left: 4px; }
.menu > button { margin-left: 14px; }
.menu > button:first-of-type { margin-left: 7px; }
.mdi { display: flex; gap: 1px; margin: 0 -7px 0 auto; }
.mdi button { width: 17px; height: 17px; background: #f4f3ec; border: 1px solid #fff; }
.mdi svg { stroke: #77756a; }

/* horizontal toolbars */
.row { display: flex; flex: none; height: 30px; overflow: hidden; }
.hbar {
  display: flex;
  align-items: center;
  flex: none;
  padding: 0 3px 0 2px;
  border: 1px solid;
  border-color: #fff var(--shade) var(--shade) #fff;
}
.hbar > button { width: 24px; height: 24px; }
.hbar > .dd { width: 13px; }
.hbar > .dd svg { width: 6px; }
.hbar .grip {
  width: 7px;
  height: 24px;
  margin-right: 3px;
  border: solid;
  border-width: 0 2px;
  border-color: #fff;
  box-shadow: 1px 0 var(--shade), inset 1px 0 var(--shade);
}
.hbar .sep { width: 2px; height: 20px; margin: 0 2px; background: linear-gradient(90deg, var(--shade) 50%, #fff 50%); }
.grey button svg { background: #c6c3c6; }
.grey .p svg { background: none; }

.combo {
  display: flex;
  align-items: center;
  height: 24px;
  margin-right: 1px;
  background: #fff;
  border: 2px solid;
  border-color: var(--dark) #fff #fff var(--dark);
  padding-left: 4px;
}
.combo select {
  flex: 1;
  min-width: 0;
  appearance: none;
  border: 0;
  padding: 0 4px;
  background: none;
  color: #000;
  font: 12px/18px "Liberation Mono", monospace;
}
.combo i {
  width: 17px;
  height: 20px;
  flex: none;
  background: var(--face);
  border: 1px solid;
  border-color: #fff var(--dark) var(--dark) #fff;
  position: relative;
}
.combo i::after {
  content: "";
  position: absolute;
  left: 4px;
  top: 7px;
  border: 4px solid transparent;
  border-top-color: #000;
  border-bottom: 0;
}
.layer { width: 179px; }
.color { width: 99px; }
.ltype { width: 163px; }
.lweight { width: 129px; }
.pstyle { width: 124px; }
.state { width: 76px; }
.swatch { width: 11px; }
.line { height: 1px; background: #000; }
.ltype .line { width: 60px; }
.lweight .line { width: 35px; }
.off { background: var(--face); }
.off select { color: var(--shade); opacity: 1; }
.off i::after { border-top-color: var(--shade); }

/* vertical toolbars */
main { flex: 1; min-height: 0; display: flex; overflow: hidden; }
.vcol { width: 27px; flex: none; display: flex; flex-direction: column; overflow: hidden; }
.vbar {
  flex: none;
  display: flex;
  flex-direction: column;
  align-items: center;
  border: 1px solid;
  border-color: #fff var(--shade) var(--shade) #fff;
  padding-bottom: 7px;
  width: 27px;
}
.rest { flex: 1; }
.right .vbar { padding-bottom: 8px; }
.vbar button { width: 24px; height: 23px; }
.vbar .grip {
  width: 22px;
  height: 7px;
  margin-bottom: 1px;
  border: solid #fff;
  border-width: 2px 0;
  box-shadow: 0 1px var(--shade), inset 0 1px var(--shade);
}
.vbar .sep { width: 20px; height: 2px; margin: 2px 0; background: linear-gradient(var(--shade) 50%, #fff 50%); }
.last { width: 17px; align-items: flex-start; }
.lt { font-size: 10px; line-height: 10px; }
.lt.two { font-size: 9px; line-height: 8px; }
.lt.sm { font-size: 8px; }
.lt b { color: #f00; font-weight: normal; }
.lt .q { color: #900000; font-size: 11px; }
.vbar .framed { width: 17px; height: 15px; margin: 4px 0; border: 1px solid #777; }
.vbar .esc { width: 16px; height: 11px; margin: 6px 0; background: #000080; color: #fff; font-size: 7px; }
.blue { color: #00f; font-family: "Liberation Mono", monospace; }
.dim { color: #888; }

/* drawing view */
.view {
  flex: 1;
  min-width: 0;
  display: flex;
  flex-direction: column;
  margin: 0 3px 0 0;
  border-left: 2px solid var(--dark);
  border-top: 1px solid var(--dark);
}
.screen { flex: 1; min-height: 0; display: flex; }
.canvas { flex: 1; min-width: 0; position: relative; overflow: hidden; background: #000; }
.drawing { position: absolute; left: 0; top: 0; width: 1151px; height: 797px; stroke: #fff; }
.drawing text { font: 200 27px "DejaVu Sans Light", "DejaVu Sans", sans-serif; fill: #fff; }
.solid { fill: #fff; stroke: none; }
.sheet {
  position: absolute;
  right: 0;
  bottom: 6px;
  width: 526px;
  height: 444px;
  overflow: hidden;
  background: #fff;
  border-left: 2px solid #1060c0;
  border-top: 1px solid #808080;
}
.sheet table { width: 525px; height: 442px; border-collapse: collapse; table-layout: fixed; }
.sheet tr { height: 23px; }
.c0 { width: 37px; }
.ca { width: 128px; }
.cb { width: 139px; }
.cc { width: 91px; }
.cd { width: 90px; }
.ce { width: 40px; }
.sheet th, .sheet td { padding: 0 8px; border: 1px solid #b4b4b4; font: var(--thin); text-align: right; }
.sheet th { padding: 0; height: 23px; background: #e4e4e4; border-color: #808080; text-align: center; }
.sheet td:nth-of-type(3) { padding-right: 3px; }
.sheet th.cur { background: #ffcc66; border-bottom-color: #000080; }
.sheet .note {
  padding: 0 0 0 6px;
  border: 2px solid #000;
  border-right: 0;
  text-align: left;
  font: bold 30px/40px "Noto Sans CJK JP", sans-serif;
}
.boxed td:nth-of-type(-n+3) { border-top: 2px solid #000; border-bottom: 2px solid #000; }
.boxed td:nth-of-type(3) { border-right: 2px solid #000; }

.vscroll { width: 17px; display: flex; flex-direction: column; background: linear-gradient(90deg, #eeede5, #fff); }
.vscroll button { height: 17px; border: 1px solid #98b4ee; border-radius: 2px; background: linear-gradient(90deg, #d6e3ff, #b8cdfa); }
.vscroll svg { width: 15px; height: 15px; stroke: #4d6185; stroke-width: 2; }
.vscroll .lines { stroke: #8caae6; stroke-width: 1; }
.vscroll .gap { height: 25px; }
.vscroll .fill { flex: 1; }

.tabs { height: 17px; flex: none; display: flex; padding-right: 17px; }
.nav { display: flex; }
.nav button { width: 19px; height: 15px; border: 1px solid; border-color: #fff var(--shade) var(--shade) #fff; }
.nav svg { height: 15px; }
.tab { position: relative; width: 59px; height: 15px; font-size: 13px; line-height: 14px; }
.tab.on { width: 44px; color: #fff; font-weight: bold; }
.tab svg { position: absolute; left: 0; top: 0; width: 60px; height: 15px; }
.tab.on svg { width: 46px; }
.tab span { position: relative; }
.hscroll { width: 392px; margin-left: auto; display: flex; background: #f6f4ec; }
.hscroll button, .cscroll button { width: 17px; height: 15px; background: var(--face); border: 1px solid; border-color: #fff var(--dark) var(--dark) #fff; }
.hscroll .split { width: 6px; background: var(--face); border: 1px solid; border-color: #fff var(--dark) #fff #fff; }
.hscroll .fill { flex: 1; }
.hscroll .gap { width: 102px; }

/* command window and status bar */
.cmd { flex: none; border-top: 1px solid #000; position: relative; padding: 8px 0 2px 2px; font-size: 15px; }
.cmd::before { content: ""; position: absolute; left: 0; right: 0; top: 0; height: 5px; border-bottom: 1px solid #000; box-shadow: inset 0 2px #fff, inset 0 3px var(--shade); }
.log { display: flex; height: 15px; background: #fff; border-top: 1px solid #000; border-left: 1px solid #000; }
.log p { flex: 1; margin: 0; line-height: 14px; }
.mini { width: 12px; background: repeating-linear-gradient(#c4d5fb 0 5px, #7f9fe0 5px 6px, #fff 6px 7px); }
.prompt { display: flex; height: 17px; background: #fff; border-top: 1px solid var(--shade); border-left: 1px solid #000; border-bottom: 1px solid #f4f2e8; }
.prompt label { line-height: 15px; }
.prompt input { flex: 1; min-width: 0; border: 0; padding: 0 4px; outline: 0; font: inherit; background: none; }
.cscroll { display: flex; width: 81px; padding: 0 13px 0 3px; background: var(--face); }
.cscroll span { flex: 1; background: #f6f4ec; }
.cscroll button { width: 16px; height: 15px; }
.cscroll svg { width: 14px; height: 13px; }

.status { flex: none; height: 25px; border-top: 1px solid var(--shade); display: flex; gap: 2px; padding: 3px 0 0 8px; overflow: hidden; font: 300 15px/22px Roboto, "Noto Sans CJK JP", sans-serif; }
.status output { width: 331px; height: 24px; padding-left: 4px; border: 1px solid; border-color: var(--shade) #fff #fff var(--shade); }
.status button { height: 24px; padding: 0 2px; border: 1px solid; border-color: #fff var(--shade) var(--shade) #fff; }
.status .in { border-color: #000 #fff #fff #000; }
```
